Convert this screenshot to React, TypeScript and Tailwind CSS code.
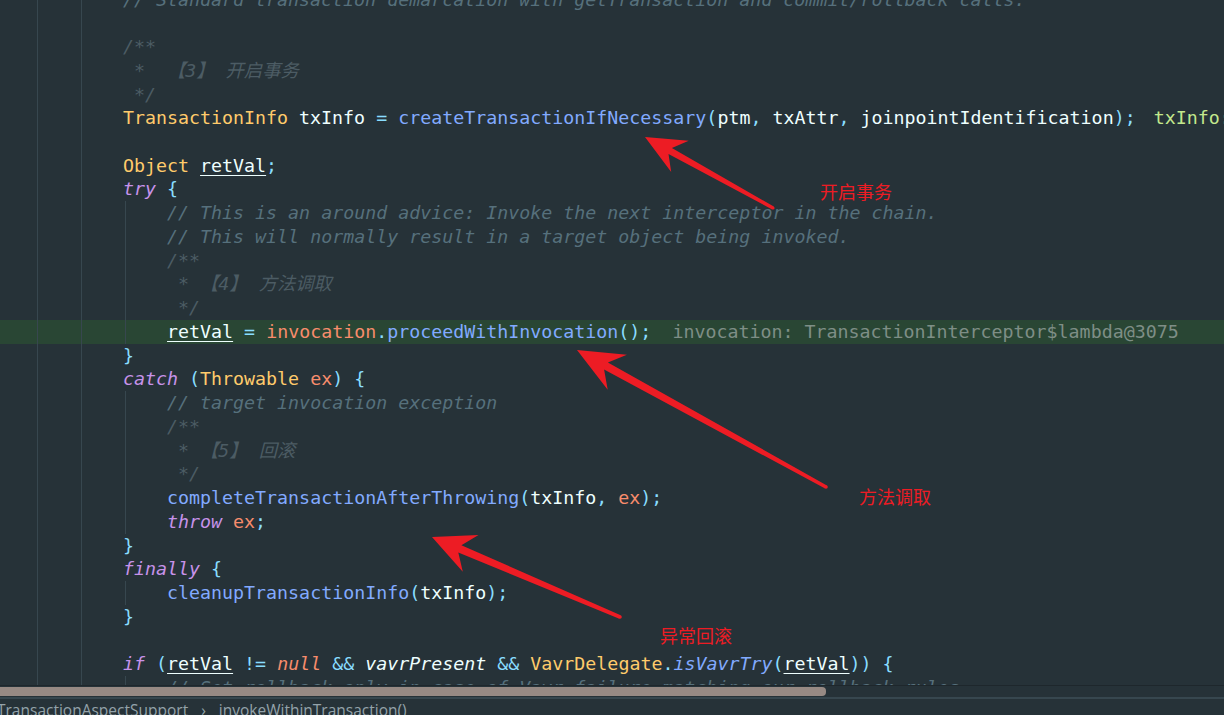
import React from "react";

type Tok = [string, string];

const C: Record<string, string> = {
  c: "text-[#56707c] italic",
  d: "text-[#4c5c64] italic",
  t: "text-[#ffcb6b]",
  v: "text-[#eeffff]",
  m: "text-[#82aaff]",
  k: "text-[#c792ea] italic",
  p: "text-[#89ddff]",
  f: "text-[#f78c6c]",
  s: "text-[#eeffff] italic",
  sm: "text-[#82aaff] italic",
  u: "text-[#eeffff] underline decoration-1 underline-offset-[3px]",
  n: "text-[#f78c6c] italic",
  h1: "text-[#c3e88d] ml-[18px]",
  h2: "text-[#7e8e86] ml-[21px]",
  w: "",
};

type Line = { lvl: number; toks: Tok[]; hl?: boolean };

const lines: Line[] = [
  { lvl: 2, toks: [["c", "// Standard transaction demarcation with getTransaction and commit/rollback calls."]] },
  { lvl: 2, toks: [] },
  { lvl: 2, toks: [["d", "/**"]] },
  { lvl: 2, toks: [["d", " *  【3】 开启事务"]] },
  { lvl: 2, toks: [["d", " */"]] },
  {
    lvl: 2,
    toks: [
      ["t", "TransactionInfo"], ["v", " txInfo "], ["p", "="], ["w", " "],
      ["m", "createTransactionIfNecessary"], ["p", "("], ["v", "ptm"], ["p", ","],
      ["v", " txAttr"], ["p", ","], ["v", " joinpointIdentification"], ["p", ");"],
      ["h1", "txInfo: PROPAGATION_REQUIRED,ISOLATION_DEFAULT"],
    ],
  },
  { lvl: 2, toks: [] },
  { lvl: 2, toks: [["t", "Object"], ["w", " "], ["u", "retVal"], ["p", ";"]] },
  { lvl: 2, toks: [["k", "try"], ["w", " "], ["p", "{"]] },
  { lvl: 3, toks: [["c", "// This is an around advice: Invoke the next interceptor in the chain."]] },
  { lvl: 3, toks: [["c", "// This will normally result in a target object being invoked."]] },
  { lvl: 3, toks: [["d", "/**"]] },
  { lvl: 3, toks: [["d", " * 【4】 方法调取"]] },
  { lvl: 3, toks: [["d", " */"]] },
  {
    lvl: 3,
    hl: true,
    toks: [
      ["u", "retVal"], ["w", " "], ["p", "="], ["w", " "], ["f", "invocation"], ["p", "."],
      ["m", "proceedWithInvocation"], ["p", "();"],
      ["h2", "invocation: TransactionInterceptor$lambda@3075"],
    ],
  },
  { lvl: 2, toks: [["p", "}"]] },
  {
    lvl: 2,
    toks: [["k", "catch"], ["w", " "], ["p", "("], ["t", "Throwable"], ["w", " "], ["f", "ex"], ["p", ") {"]],
  },
  { lvl: 3, toks: [["c", "// target invocation exception"]] },
  { lvl: 3, toks: [["d", "/**"]] },
  { lvl: 3, toks: [["d", " * 【5】 回滚"]] },
  { lvl: 3, toks: [["d", " */"]] },
  {
    lvl: 3,
    toks: [
      ["m", "completeTransactionAfterThrowing"], ["p", "("], ["v", "txInfo"], ["p", ","],
      ["w", " "], ["f", "ex"], ["p", ");"],
    ],
  },
  { lvl: 3, toks: [["k", "throw"], ["w", " "], ["f", "ex"], ["p", ";"]] },
  { lvl: 2, toks: [["p", "}"]] },
  { lvl: 2, toks: [["k", "finally"], ["w", " "], ["p", "{"]] },
  { lvl: 3, toks: [["m", "cleanupTransactionInfo"], ["p", "("], ["v", "txInfo"], ["p", ");"]] },
  { lvl: 2, toks: [["p", "}"]] },
  { lvl: 2, toks: [] },
  {
    lvl: 2,
    toks: [
      ["k", "if"], ["w", " "], ["p", "("], ["u", "retVal"], ["w", " "], ["p", "!="], ["w", " "],
      ["n", "null"], ["w", " "], ["p", "&&"], ["w", " "], ["s", "vavrPresent"], ["w", " "],
      ["p", "&&"], ["w", " "], ["t", "VavrDelegate"], ["p", "."], ["sm", "isVavrTry"],
      ["p", "("], ["u", "retVal"], ["p", "))"], ["w", " "], ["p", "{"],
    ],
  },
  { lvl: 3, toks: [["c", "// Set rollback only in case of Vavr failure matching our rollback rules..."]] },
];

function Guide() {
  return (
    <div className="shrink-0 w-[44.07px] self-stretch pl-[2px]">
      <div className="h-full border-l border-[#37474f]" />
    </div>
  );
}

function arrowPoints(
  T: [number, number],
  E: [number, number],
  L: number,
  W: number,
  w1: number,
  w2: number
) {
  const dx = T[0] - E[0];
  const dy = T[1] - E[1];
  const len = Math.hypot(dx, dy);
  const ux = dx / len;
  const uy = dy / len;
  const nx = -uy;
  const ny = ux;
  const bx = T[0] - ux * L;
  const by = T[1] - uy * L;
  const nnx = T[0] - ux * L * 0.72;
  const nny = T[1] - uy * L * 0.72;
  const pts: [number, number][] = [
    T,
    [bx + nx * W, by + ny * W],
    [nnx + nx * w1, nny + ny * w1],
    [E[0] + nx * w2, E[1] + ny * w2],
    [E[0] - nx * w2, E[1] - ny * w2],
    [nnx - nx * w1, nny - ny * w1],
    [bx - nx * W, by - ny * W],
  ];
  return pts.map((p) => `${p[0].toFixed(1)},${p[1].toFixed(1)}`).join(" ");
}

export default function App() {
  return (
    <div className="relative w-[1224px] h-[715px] overflow-hidden bg-[#263238]">
      <div className="h-[685px] overflow-hidden">
        <div
          className="-mt-[12.4px] pl-[34.86px] text-[18.3px] whitespace-pre"
          style={{ fontFamily: "'DejaVu Sans Mono', 'Noto Sans CJK SC', monospace" }}
        >
          {lines.map((ln, i) => (
            <div
              key={i}
              className={`flex items-center h-[23.74px] ${ln.hl ? "bg-[#294634] -ml-[34.86px] pl-[34.86px]" : ""}`}
            >
              {Array.from({ length: ln.lvl }).map((_, g) => (
                <Guide key={g} />
              ))}
              <span className="leading-[23.74px]">
                {ln.toks.map((t, j) => (
                  <span key={j} className={C[t[0]]}>
                    {t[1]}
                  </span>
                ))}
              </span>
            </div>
          ))}
        </div>
      </div>
      <div className="h-px bg-[#1e272c]" />
      <div className="h-[11px] pt-[1px]">
        <div className="w-[826px] h-[9px] bg-[#978a84] rounded-r-[4px]" />
      </div>
      <div className="h-[2px] bg-[#37474f]" />
      <div
        className="h-[16px] pt-[1px] flex items-start gap-[13px] -ml-[3px] text-[15.5px] leading-[20px] text-[#94a3aa]"
        style={{ fontFamily: "'Open Sans', 'Noto Sans', sans-serif" }}
      >
        <span>TransactionAspectSupport</span>
        <span>›</span>
        <span>invokeWithinTransaction()</span>
      </div>

      <svg
        className="absolute left-0 top-0 pointer-events-none"
        width={1224}
        height={715}
        viewBox="0 0 1224 715"
      >
        <polygon points={arrowPoints([645, 137], [773, 208], 40, 18, 3.5, 1.6)} fill="#ed1c24" />
        <polygon points={arrowPoints([577, 350], [826, 487], 46, 20, 4, 1.8)} fill="#ed1c24" />
        <polygon points={arrowPoints([432, 537], [620, 617], 42, 20, 4, 1.8)} fill="#ed1c24" />
        <circle cx={773} cy={208} r={1.6} fill="#ed1c24" />
        <circle cx={826} cy={487} r={1.8} fill="#ed1c24" />
        <circle cx={620} cy={617} r={1.8} fill="#ed1c24" />
      </svg>
      <div
        className="absolute left-[820px] top-[182px] text-[18px] leading-none text-[#ed1c24] pointer-events-none"
        style={{ fontFamily: "'Noto Sans CJK SC', sans-serif" }}
      >
        开启事务
      </div>
      <div
        className="absolute left-[859px] top-[487px] text-[18px] leading-none text-[#ed1c24] pointer-events-none"
        style={{ fontFamily: "'Noto Sans CJK SC', sans-serif" }}
      >
        方法调取
      </div>
      <div
        className="absolute left-[660px] top-[626px] text-[18px] leading-none text-[#ed1c24] pointer-events-none"
        style={{ fontFamily: "'Noto Sans CJK SC', sans-serif" }}
      >
        异常回滚
      </div>
    </div>
  );
}
